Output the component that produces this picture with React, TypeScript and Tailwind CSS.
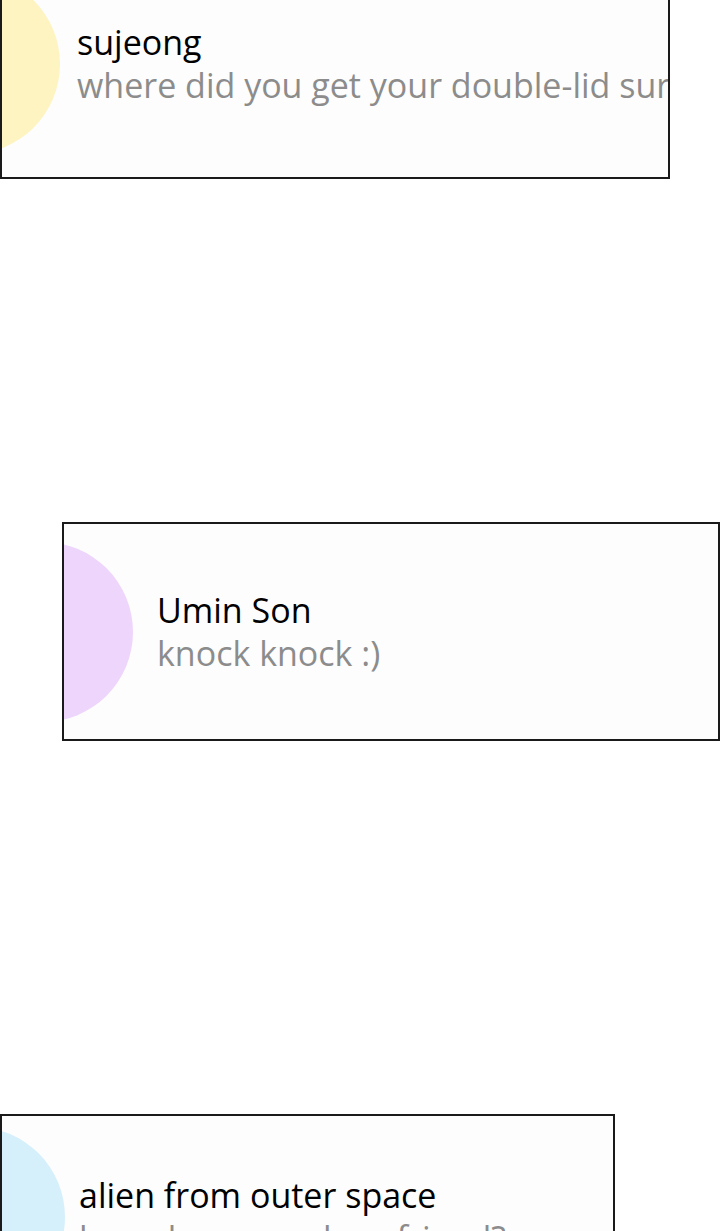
const FONT = { fontFamily: '"Open Sans", "Noto Sans CJK KR", sans-serif' };

function ChatRow({
  name,
  message,
  dot,
  gap,
}: {
  name: string;
  message: string;
  dot: string;
  gap: string;
}) {
  return (
    <div className="flex items-center h-full">
      <div className={`w-[180px] h-[180px] rounded-full shrink-0 ${dot}`} />
      <div className={`flex flex-col whitespace-nowrap leading-[43px] font-medium ${gap}`}>
        <span className="text-[34px] text-black">{name}</span>
        <span className="text-[34px] text-[#8c8c8c]">{message}</span>
      </div>
    </div>
  );
}

export default function App() {
  return (
    <div className="w-[720px] h-[1231px] overflow-hidden bg-white" style={FONT}>
      {/* first bubble, top is cut off */}
      <div className="-mt-[50px] w-[670px] h-[229px] border-2 border-[#1a1a1a] bg-[#fdfdfd] overflow-hidden">
        <div className="h-full -ml-[122px] pt-[50px]">
          <div className="-mt-[28px] h-[180px]">
            <ChatRow
              name="sujeong"
              message="where did you get your double-lid surgery done?"
              dot="bg-[#fdf4c2]"
              gap="ml-[17px]"
            />
          </div>
        </div>
      </div>

      {/* second bubble */}
      <div className="mt-[343px] ml-[62px] w-[658px] h-[219px] border-2 border-[#1a1a1a] bg-[#fdfdfd] overflow-hidden">
        <div className="h-full -ml-[111px]">
          <ChatRow
            name="Umin Son"
            message="knock knock :)"
            dot="bg-[#eed5fb]"
            gap="ml-[24px]"
          />
        </div>
      </div>

      {/* third bubble, bottom is cut off */}
      <div className="mt-[373px] w-[615px] h-[220px] border-2 border-[#1a1a1a] bg-[#fdfdfd] overflow-hidden">
        <div className="-ml-[117px] pt-[21px] h-[180px]">
          <ChatRow
            name="alien from outer space"
            message="how do you make a friend?"
            dot="bg-[#d6f0fb]"
            gap="ml-[14px]"
          />
        </div>
      </div>
    </div>
  );
}
